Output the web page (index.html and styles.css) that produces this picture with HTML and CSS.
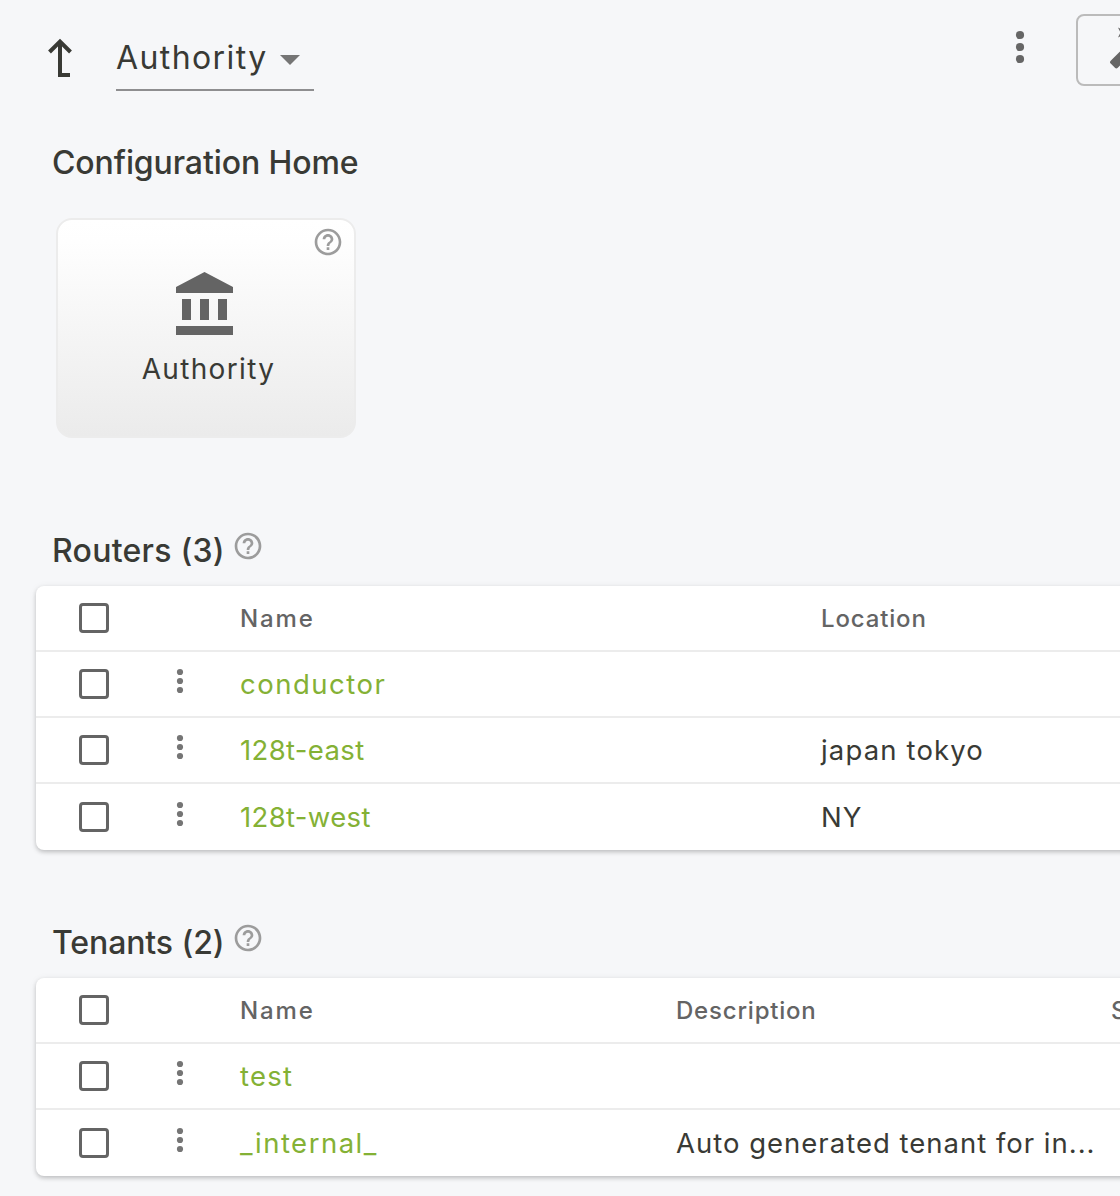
FILE: index.html
```html
<!DOCTYPE html>
<html lang="en">
<head>
<meta charset="utf-8">
<title>Configuration</title>
<link rel="stylesheet" href="styles.css">
</head>
<body>
<svg class="defs" aria-hidden="true">
  <symbol id="help" viewBox="0 0 24 24"><path d="M11 18h2v-2h-2v2zm1-16C6.480 2 2 6.480 2 12s4.480 10 10 10 10-4.480 10-10S17.520 2 12 2zm0 18c-4.410 0-8-3.590-8-8s3.590-8 8-8 8 3.590 8 8-3.590 8-8 8zm0-14c-2.210 0-4 1.790-4 4h2c0-1.100.9-2 2-2s2 .9 2 2c0 2-3 1.750-3 5h2c0-2.250 3-2.500 3-5 0-2.210-1.790-4-4-4z"/></symbol>
  <symbol id="more" viewBox="0 0 8 26"><circle cx="4" cy="4" r="3.100"/><circle cx="4" cy="13" r="3.100"/><circle cx="4" cy="22" r="3.100"/></symbol>
</svg>
<header class="toolbar">
  <svg class="up" viewBox="0 0 28 40"><path d="M14 3.500V37M3.500 14L14 3.500 24.500 14M12 37h12"/></svg>
  <div class="select"><span class="w-select">Authority</span><svg class="caret" viewBox="0 0 20 10"><path d="M0 0h20L10 10z"/></svg></div>
  <div class="actions">
    <svg class="kebab" viewBox="0 0 10 34"><circle cx="5" cy="5" r="4.100"/><circle cx="5" cy="17" r="4.100"/><circle cx="5" cy="29" r="4.100"/></svg>
    <button class="wand" aria-label="Validate"><svg viewBox="0 0 48 48"><rect x="-5" y="-25" width="10" height="50" rx="2" transform="translate(28.500 22) rotate(45)" /><path d="M16 1.500l5 2.500 5-2.500-2.500 5 2.500 5-5-2.500-5 2.500 2.500-5z"/></svg></button>
  </div>
</header>
<main>
  <h2 class="heading w-home">Configuration Home</h2>
  <a class="tile">
    <svg class="help tile-help"><use href="#help"/></svg>
    <svg class="bank" viewBox="0 0 24 24"><path d="M4 10v7h3v-7H4zm6 0v7h3v-7h-3zM2 22h19v-3H2v3zm14-12v7h3v-7h-3zM11.500 1L2 6v2h19V6l-9.500-5z"/></svg>
    <span class="tile-label">Authority</span>
  </a>
  <section class="group">
    <div class="title"><h2 class="heading w-routers">Routers (3)</h2><svg class="help"><use href="#help"/></svg></div>
    <div class="table routers">
      <div class="row head"><i class="box"></i><span></span><span class="w-name">Name</span><span class="w-loc">Location</span></div>
      <div class="row"><i class="box"></i><svg class="more"><use href="#more"/></svg><a class="w-conductor">conductor</a><span></span></div>
      <div class="row"><i class="box"></i><svg class="more"><use href="#more"/></svg><a class="w-east">128t-east</a><span class="w-tokyo">japan tokyo</span></div>
      <div class="row"><i class="box"></i><svg class="more"><use href="#more"/></svg><a class="w-west">128t-west</a><span class="w-ny">NY</span></div>
    </div>
  </section>
  <section class="group">
    <div class="title"><h2 class="heading w-tenants">Tenants (2)</h2><svg class="help"><use href="#help"/></svg></div>
    <div class="table tenants">
      <div class="row head"><i class="box"></i><span></span><span class="w-name">Name</span><span class="w-desc">Description</span><span>S</span></div>
      <div class="row"><i class="box"></i><svg class="more"><use href="#more"/></svg><a class="w-test">test</a><span></span><span></span></div>
      <div class="row"><i class="box"></i><svg class="more"><use href="#more"/></svg><a class="w-internal">_internal_</a><span class="w-auto">Auto generated tenant for in...</span><span></span></div>
    </div>
  </section>
</main>
</body>
</html>
```
FILE: styles.css
```css
* { box-sizing: border-box; }
body {
  margin: 0;
  width: 1120px;
  height: 1196px;
  overflow: hidden;
  background: #f6f7f9;
  color: #393a35;
  font: 400 27.5px/40px Inter, "Liberation Sans", sans-serif;
}
svg { display: block; flex: none; }
.defs { width: 0; height: 0; position: absolute; }

.toolbar { display: flex; align-items: flex-start; height: 143px; padding-left: 46px; }
.up { width: 28px; height: 40px; margin-top: 38px; fill: none; stroke: #393a35; stroke-width: 4; }
.select {
  display: flex;
  align-items: flex-start;
  justify-content: space-between;
  width: 198px;
  height: 53px;
  margin: 38px 0 0 42px;
  padding-right: 14px;
  border-bottom: 2px solid #8e8e90;
  font-size: 32px;
  white-space: nowrap;
}
.caret { width: 20px; height: 10px; margin-top: 17px; fill: #757575; }
.actions { display: flex; margin-left: auto; width: 105px; padding-top: 14px; }
.kebab { width: 10px; height: 34px; margin: 16px 51px 0 0; fill: #666; }
.wand {
  flex: none;
  width: 116px;
  height: 72px;
  padding: 10px 24px;
  border: 2px solid #bbb;
  border-radius: 8px;
  background: none;
}
.wand svg { width: 48px; height: 48px; fill: #666; }

.heading { margin: 0; font-size: 32px; font-weight: 500; line-height: 40px; white-space: nowrap; }
main { padding-left: 36px; }
main > .heading { padding-left: 16px; }

.tile {
  position: relative;
  display: flex;
  flex-direction: column;
  align-items: center;
  width: 300px;
  height: 220px;
  margin: 35px 0 0 20px;
  padding-top: 49px;
  border: 2px solid #ececec;
  border-radius: 16px;
  background: linear-gradient(#fff, #fefefe 10%, #ebebeb);
}
.help { width: 32px; height: 32px; fill: #9c9c9c; }
.tile-help { position: absolute; top: 6px; right: 10px; }
.bank { width: 72px; height: 72px; fill: #646464; }
.tile-label { margin-top: 8px; padding-left: 5px; font-size: 28px; letter-spacing: 1.35px; }

.title { display: flex; gap: 9px; height: 56px; padding-left: 16px; }
.title .heading { width: 171px; padding-top: 1px; }
.tile + .group { margin-top: 92px; }
.group + .group { margin-top: 72px; }

.table {
  width: 1100px;
  border-radius: 8px;
  background: #fff;
  box-shadow: 0 2px 4px rgba(0, 0, 0, .2), 0 1px 8px rgba(0, 0, 0, .06);
}
.row {
  display: grid;
  grid-template-columns: 97px 107px 581px 1fr;
  align-items: center;
  height: 66px;
  border-bottom: 2px solid #ececec;
  white-space: nowrap;
}
.tenants .row { grid-template-columns: 97px 107px 436px 435px 1fr; }
.row:last-child { border-bottom: 0; }
.head { color: #646464; font-size: 24px; font-weight: 500; }
.head span { padding-top: 1px; }
.box { width: 30px; height: 30px; margin-left: 43px; border: 3px solid #646464; border-radius: 4px; }
.more { width: 8px; height: 26px; margin: -6px 0 0 43px; fill: #757575; }
.row a { color: #84b135; }

/* Tracking per label */
.w-select { letter-spacing: 1.4px; }
.w-home { letter-spacing: -.1px; }
.w-routers { letter-spacing: .25px; }
.w-tenants { letter-spacing: -.1px; }
.w-name { letter-spacing: 1.9px; }
.w-loc { letter-spacing: .85px; }
.w-desc { letter-spacing: .8px; }
.w-conductor { letter-spacing: 1.5px; }
.w-east, .w-west { letter-spacing: .35px; }
.w-tokyo { letter-spacing: 1.15px; }
.w-ny { letter-spacing: 1px; }
.w-test { letter-spacing: 1.2px; }
.w-internal { letter-spacing: 1.5px; }
.w-auto { letter-spacing: 1px; }
```
